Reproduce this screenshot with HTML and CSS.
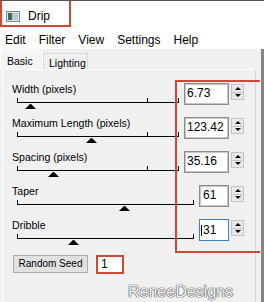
FILE: index.html
```html
<!DOCTYPE html>
<html lang="en">
<head>
    <meta charset="UTF-8">
    <meta name="viewport" content="width=device-width, initial-scale=1.0">
    <title>Drip</title>
    <link rel="stylesheet" href="styles.css">
</head>
<body>
    <div class="window">
        <div class="titlebar">
            <div class="title-mark">
                <svg class="app-icon" width="14" height="11" viewBox="0 0 14 11">
                    <rect x="0.5" y="0.5" width="13" height="10" fill="#dfe5e6" stroke="#7f8c8e"/>
                    <rect x="2" y="2" width="4" height="7" fill="#3f6568"/>
                    <rect x="6" y="2" width="6" height="7" fill="#b9cacc"/>
                </svg>
                <span class="title">Drip</span>
            </div>
        </div>

        <div class="menubar">
            <span>Edit</span>
            <span>Filter</span>
            <span>View</span>
            <span>Settings</span>
            <span>Help</span>
        </div>

        <div class="main">
            <div class="tabs">
                <div class="tab active">Basic</div>
                <div class="tab">Lighting</div>
            </div>

            <div class="page">
                <div class="row">
                    <div class="control">
                        <div class="label">Width (pixels)</div>
                        <div class="slider">
                            <div class="track"><span class="tick"></span></div>
                            <span class="thumb" style="left: 8px"></span>
                        </div>
                    </div>
                    <div class="field">6.73</div>
                    <div class="spin"><span class="up"></span><span class="down"></span></div>
                </div>

                <div class="row">
                    <div class="control">
                        <div class="label">Maximum Length (pixels)</div>
                        <div class="slider">
                            <div class="track"><span class="tick"></span></div>
                            <span class="thumb" style="left: 69px"></span>
                        </div>
                    </div>
                    <div class="field">123.42</div>
                    <div class="spin"><span class="up"></span><span class="down"></span></div>
                </div>

                <div class="row">
                    <div class="control">
                        <div class="label">Spacing (pixels)</div>
                        <div class="slider">
                            <div class="track"><span class="tick"></span></div>
                            <span class="thumb" style="left: 31px"></span>
                        </div>
                    </div>
                    <div class="field">35.16</div>
                    <div class="spin"><span class="up"></span><span class="down"></span></div>
                </div>

                <div class="row">
                    <div class="control">
                        <div class="label">Taper</div>
                        <div class="slider">
                            <div class="track"></div>
                            <span class="thumb" style="left: 102px"></span>
                        </div>
                    </div>
                    <div class="field small">61</div>
                    <div class="spin"><span class="up"></span><span class="down"></span></div>
                </div>

                <div class="row">
                    <div class="control">
                        <div class="label">Dribble</div>
                        <div class="slider">
                            <div class="track"></div>
                            <span class="thumb" style="left: 51px"></span>
                        </div>
                    </div>
                    <div class="field small focused"><span class="caret"></span>31</div>
                    <div class="spin"><span class="up"></span><span class="down"></span></div>
                </div>

                <div class="seed-row">
                    <button class="seed-btn">Random Seed</button>
                    <div class="seed-field">1</div>
                </div>
            </div>
        </div>

        <div class="highlight"></div>
        <div class="watermark">ReneeDesigns</div>
    </div>
</body>
</html>
```

FILE: styles.css
```css
body {
    margin: 0;
    background-color: #f0f0f0;
    font-family: "Liberation Sans", Arial, sans-serif;
    color: #000000;
}

.window {
    position: relative;
    width: 264px;
    height: 302px;
    overflow: hidden;
    background-color: #f0f0f0;
}

/* title bar */
.titlebar {
    height: 27px;
    background-color: #ffffff;
    border-top: 1px solid #555555;
}

.title-mark {
    display: flex;
    align-items: center;
    width: 67px;
    height: 18px;
    padding-top: 6px;
    border: 2px solid #cc4a36;
    border-top: none;
}

.app-icon {
    margin-left: 4px;
}

.title {
    margin-left: 8px;
    font-size: 12px;
    line-height: 14px;
}

/* menu */
.menubar {
    display: flex;
    gap: 13px;
    height: 17px;
    padding: 4px 0 0 5px;
    background-color: #ffffff;
    font-size: 12px;
    line-height: 17px;
}

/* tabs + page */
.main {
    width: 261px;
    height: 253px;
    border-right: 3px solid #858585;
}

.tabs {
    display: flex;
    align-items: flex-end;
    height: 20px;
}

.tab {
    box-sizing: border-box;
    font-size: 10.5px;
    line-height: 12px;
    white-space: nowrap;
    border: 1px solid #d9d9d9;
    border-bottom: none;
}

.tab.active {
    width: 43px;
    height: 19px;
    padding: 4px 0 0 6px;
    background-color: #f4f4f4;
    border-color: #ffffff;
}

.tab:not(.active) {
    width: 45px;
    height: 16px;
    padding: 3px 0 0 5px;
}

.page {
    width: 243px;
    height: 232px;
    margin-left: 2px;
    padding: 12px 0 0 9px;
    border-top: 1px solid #ffffff;
    border-left: 1px solid #ffffff;
    border-right: 1px solid #d6d6d6;
}

.row {
    display: flex;
    align-items: flex-start;
    width: 232px;
    height: 34px;
}

.control {
    flex: 1;
}

.label {
    font-size: 10.6px;
    line-height: 14px;
    white-space: nowrap;
}

.slider {
    position: relative;
    height: 11px;
    margin: 2px 0 0 5px;
}

.track {
    position: relative;
    height: 4px;
    border: 1px solid #000000;
    border-top: none;
}

.tick {
    position: absolute;
    left: 129px;
    top: 0;
    width: 1px;
    height: 4px;
    background-color: #000000;
}

.thumb {
    position: absolute;
    top: 6px;
    width: 1px;
    height: 0;
    border-left: 5px solid transparent;
    border-right: 5px solid transparent;
    border-bottom: 5px solid #000000;
}

.field {
    box-sizing: border-box;
    width: 45px;
    height: 22px;
    margin: 1px 0 0 5px;
    padding-left: 2px;
    background-color: #ffffff;
    border: 1px solid #8c8c8c;
    box-shadow: inset 1px 1px 0 #c8c8c8, inset -1px -1px 0 #c8c8c8;
    font-size: 12px;
    line-height: 19px;
    white-space: nowrap;
}

.field.small {
    width: 30px;
    padding-left: 3px;
}

.field.focused {
    display: flex;
    align-items: center;
    padding-left: 1px;
    border-color: #3c80c0;
    box-shadow: none;
}

.caret {
    display: inline-block;
    width: 1px;
    height: 11px;
    margin-right: 1px;
    background-color: #000000;
}

.spin {
    box-sizing: border-box;
    display: flex;
    flex-direction: column;
    width: 13px;
    height: 16px;
    margin: 2px 0 0 2px;
    background-color: #e9e9e9;
    border: 1px solid #c4c4c4;
}

.spin span {
    flex: 1;
    display: flex;
    align-items: center;
    justify-content: center;
}

.spin .up {
    border-bottom: 1px solid #c4c4c4;
}

.spin .up::after,
.spin .down::after {
    content: "";
    width: 0;
    height: 0;
    border-left: 3px solid transparent;
    border-right: 3px solid transparent;
}

.spin .up::after {
    border-bottom: 3px solid #000000;
}

.spin .down::after {
    border-top: 3px solid #000000;
}

/* seed */
.seed-row {
    display: flex;
    align-items: flex-start;
    margin: 3px 0 0 1px;
}

.seed-btn {
    width: 75px;
    height: 18px;
    padding: 0;
    background-color: #e1e1e1;
    border: 1px solid #adadad;
    font-family: "Liberation Sans", Arial, sans-serif;
    font-size: 10px;
    line-height: 16px;
    white-space: nowrap;
    color: #000000;
}

.seed-field {
    box-sizing: border-box;
    width: 28px;
    height: 19px;
    margin-left: 8px;
    padding-left: 3px;
    background-color: #ffffff;
    border: 2px solid #cc4a36;
    font-size: 12px;
    line-height: 15px;
}

/* annotation + watermark overlays */
.highlight {
    position: absolute;
    left: 175px;
    top: 80px;
    width: 83px;
    height: 169px;
    border: 2px solid #cc4a36;
    border-right: none;
}

.watermark {
    position: absolute;
    left: 128px;
    top: 284px;
    font-size: 16px;
    line-height: 16px;
    color: #f6f6f6;
    text-shadow: 0 0 1px #4a4a4a, 0 0 1px #4a4a4a, 0 0 1px #4a4a4a;
}
```
